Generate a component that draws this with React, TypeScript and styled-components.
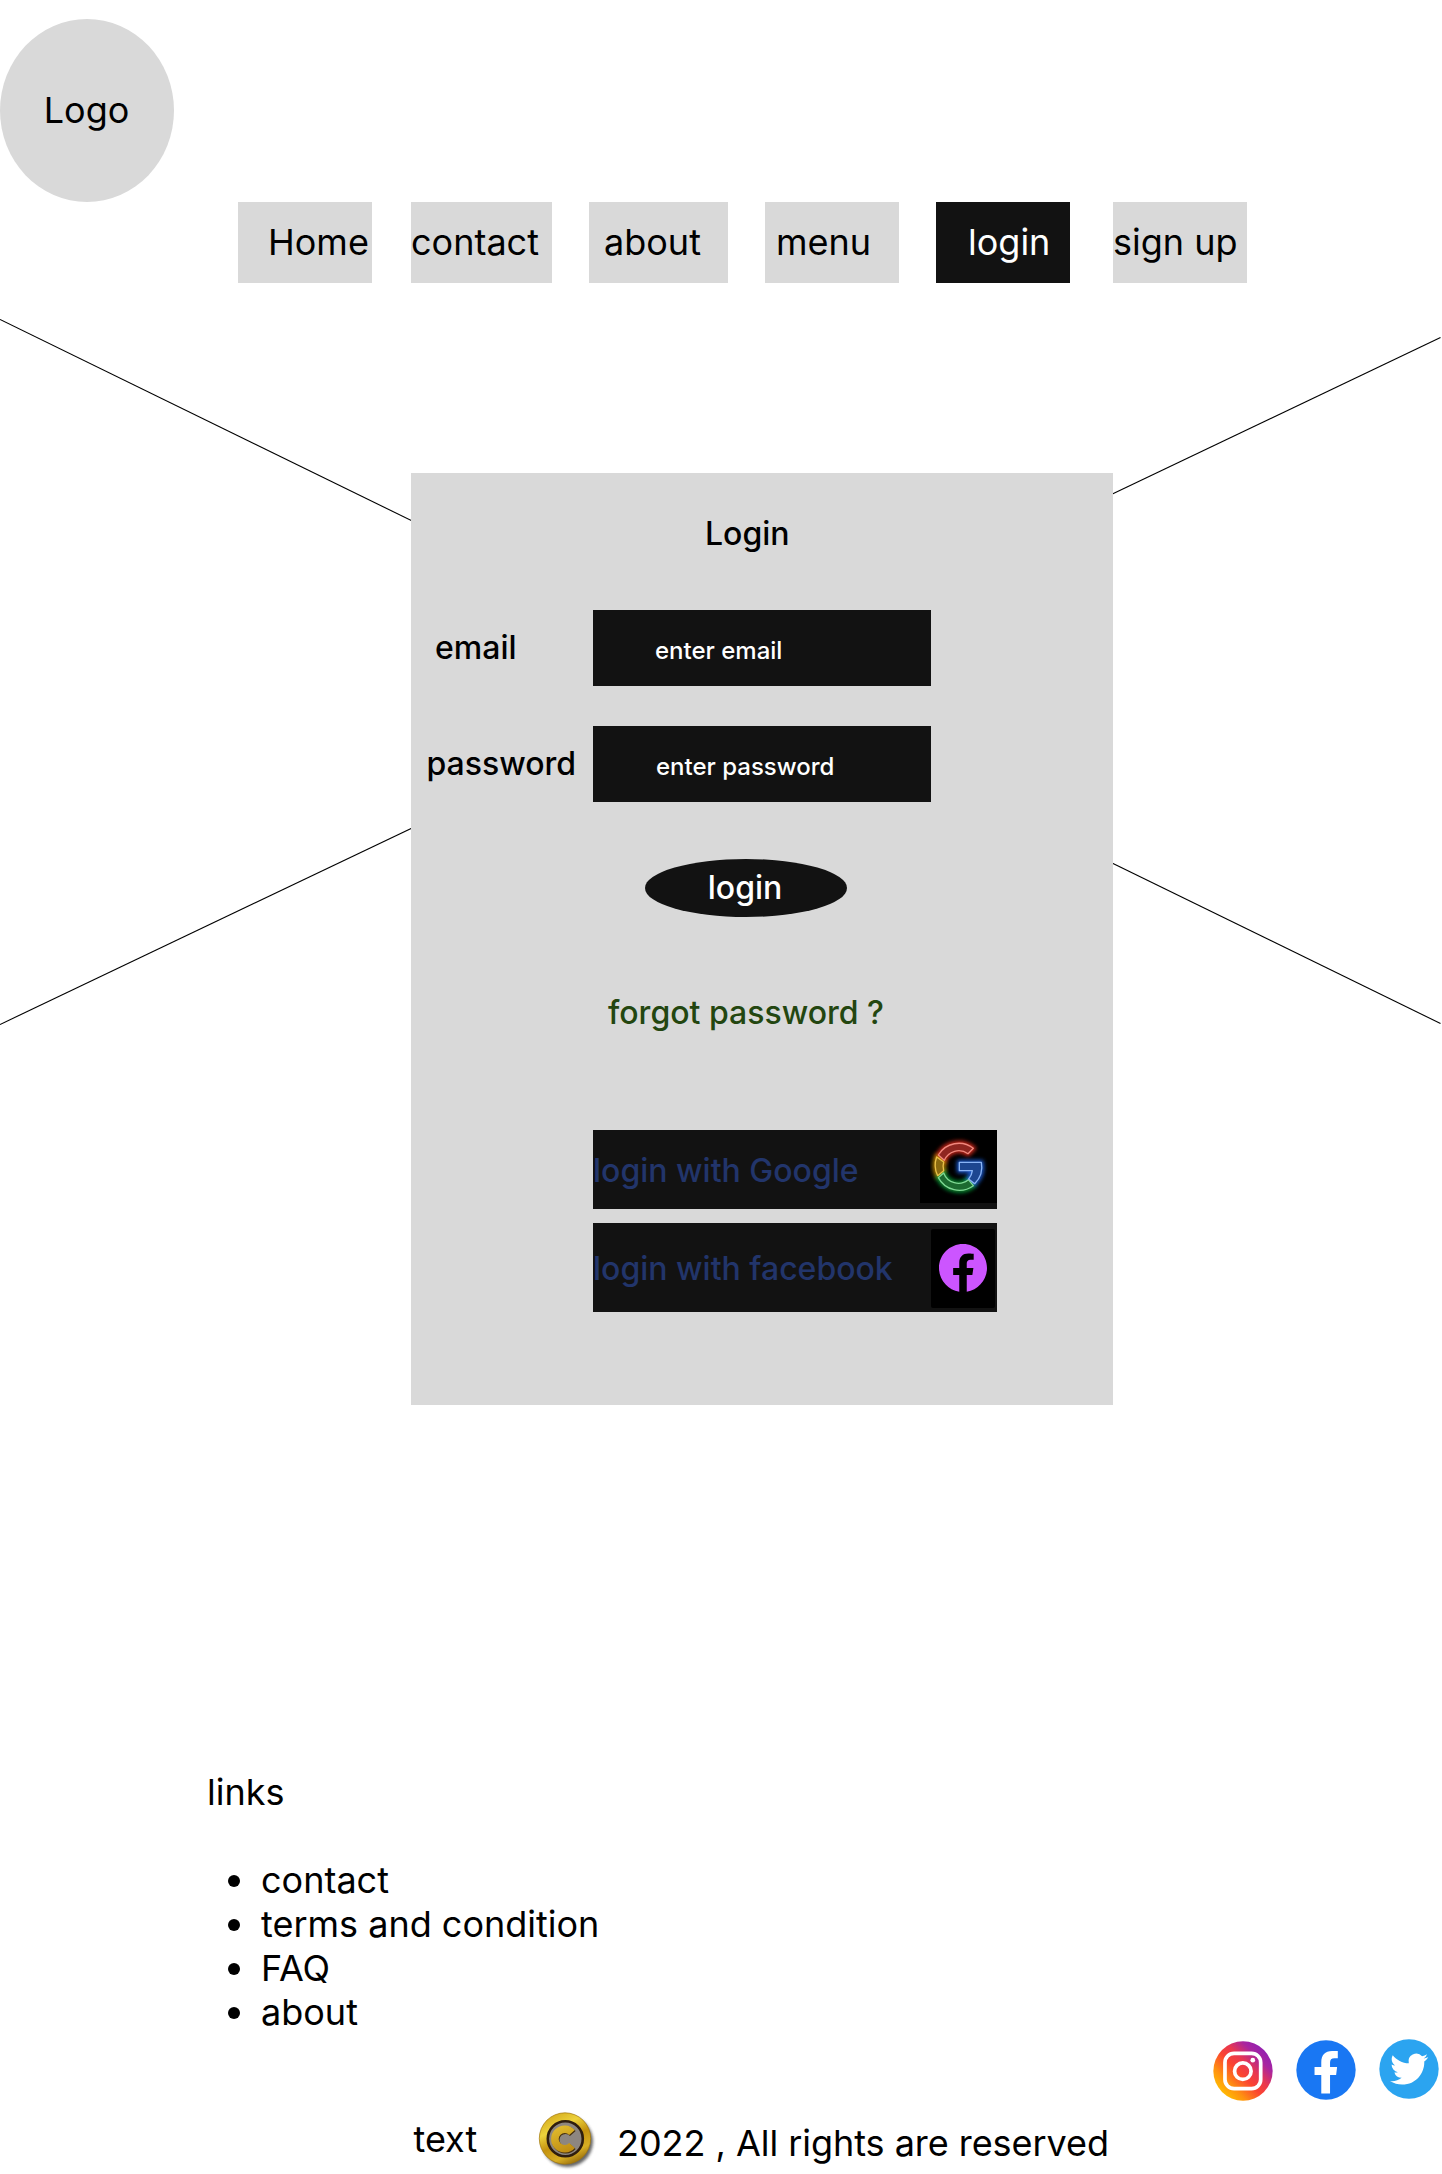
import React from "react";
import styled, { createGlobalStyle, css } from "styled-components";

const GlobalStyle = createGlobalStyle`
  *, *::before { box-sizing: border-box; }
  body {
    margin: 0;
    background: #fff;
    color: #000;
    font-family: Inter, "Liberation Sans", sans-serif;
  }
`;

const Page = styled.div`
  width: 1442px;
  height: 2174px;
  overflow: hidden;
  display: flex;
  flex-direction: column;
  font-size: 36px;
  line-height: 44px;
`;

const Header = styled.header`
  height: 283px;
  padding-top: 19px;
`;

const Logo = styled.div`
  width: 174px;
  height: 183px;
  padding: 0 1px 2px 0;
  border-radius: 50%;
  background: #d9d9d9;
  display: flex;
  align-items: center;
  justify-content: center;
`;

const Nav = styled.nav`
  display: flex;
  padding-left: 238px;
`;

const NavItem = styled.a<{ $width: number; $gap: number; $indent: number; $active?: boolean }>`
  flex: none;
  width: ${(p) => p.$width}px;
  height: 81px;
  margin-right: ${(p) => p.$gap}px;
  padding: 0 0 2px ${(p) => p.$indent}px;
  display: flex;
  align-items: center;
  white-space: nowrap;
  background: ${(p) => (p.$active ? "#121212" : "#d9d9d9")};
  color: ${(p) => (p.$active ? "#fff" : "#000")};
`;

const Stage = styled.main`
  position: relative;
  height: 1122px;
  padding: 190px 0 0 411px;
`;

const Backdrop = styled.svg`
  position: absolute;
  inset: 0;
  z-index: -1;
`;

const Card = styled.section`
  width: 702px;
  height: 932px;
  background: #d9d9d9;
  display: flex;
  flex-direction: column;
  align-items: flex-start;
  font-size: 32px;
  line-height: 39px;
  font-weight: 500;
`;

const Title = styled.h1`
  margin: 41px 0 57px 294px;
  font: inherit;
`;

const Field = styled.label<{ $indent: number }>`
  display: grid;
  grid-template-columns: 182px 338px;
  align-items: center;
  height: 76px;
  margin-bottom: 40px;
  & > :first-child {
    padding: 0 0 2px ${(p) => p.$indent}px;
  }
`;

const Entry = styled.span<{ $indent: number }>`
  height: 76px;
  padding: 4px 0 0 ${(p) => p.$indent}px;
  display: flex;
  align-items: center;
  background: #121212;
  color: #fff;
  font-size: 24px;
`;

const Submit = styled.button`
  width: 202px;
  height: 58px;
  margin: 17px 0 0 234px;
  padding: 0 2px 2px 0;
  border: 0;
  border-radius: 50%;
  background: #121212;
  color: #fff;
  font: inherit;
`;

const Forgot = styled.a`
  margin: 76px 0 98px 197px;
  color: #234610;
`;

const Provider = styled.a<{ $height: number }>`
  width: 404px;
  height: ${(p) => p.$height}px;
  margin: 0 0 14px 182px;
  display: flex;
  justify-content: space-between;
  background: #121212;
  color: #22356b;
`;

const ProviderName = styled.span`
  align-self: center;
  padding-top: 2px;
  white-space: nowrap;
`;

const Tile = styled.span<{ $kind: "google" | "facebook" }>`
  display: flex;
  align-items: center;
  justify-content: center;
  background: #000;
  ${(p) =>
    p.$kind === "google"
      ? css`
          width: 77px;
          height: 73px;
        `
      : css`
          width: 64px;
          height: 79px;
          margin: 6px 2px 0 0;
          padding-bottom: 1px;
          border-radius: 2px;
        `}
`;

const Footer = styled.footer`
  flex: 1;
  padding-top: 365px;
`;

const LinksTitle = styled.h2`
  margin: 0 0 44px 207px;
  font: inherit;
`;

const LinkList = styled.ul`
  margin: 0;
  padding: 0 0 0 228px;
  list-style: none;
`;

const LinkItem = styled.li`
  display: flex;
  align-items: center;
  gap: 21px;
  &::before {
    content: "";
    width: 12px;
    height: 12px;
    margin-top: 2px;
    border-radius: 50%;
    background: #000;
  }
`;

const Socials = styled.div`
  display: flex;
  justify-content: flex-end;
  align-items: flex-start;
  gap: 23px;
  height: 61px;
  margin-top: 5px;
  padding-right: 3px;
`;

const SocialIcon = styled.svg<{ $drop: number }>`
  width: 60px;
  height: 60px;
  margin-top: ${(p) => p.$drop}px;
`;

const Legal = styled.div`
  display: flex;
  align-items: flex-start;
  padding-left: 413.5px;
  margin-top: 8px;
`;

const LegalLabel = styled.span`
  width: 121.5px;
  margin-top: 9px;
`;

const Coin = styled.svg`
  width: 64px;
  height: 64px;
`;

const LegalText = styled.span`
  margin: 13px 0 0 18px;
  letter-spacing: -0.04px;
  white-space: nowrap;
`;

const navItems = [
  { label: "Home", width: 134, gap: 39, indent: 30 },
  { label: "contact", width: 141, gap: 37, indent: 0 },
  { label: "about", width: 139, gap: 37, indent: 15 },
  { label: "menu", width: 134, gap: 37, indent: 11 },
  { label: "login", width: 134, gap: 43, indent: 32, active: true },
  { label: "sign up", width: 134, gap: 0, indent: 0 },
];

const links = ["contact", "terms and condition", "FAQ", "about"];

const neonParts = [
  { fill: "#8f2620", line: "#f0877c", glow: "#ff3020", d: "M55 75A71 71 0 0 1 160 55L144 71A47 47 0 0 0 73 91Z" },
  { fill: "#8a6a10", line: "#e8c04a", glow: "#e0a000", d: "M50 81L71 96A47 47 0 0 0 71 122L53 137A71 71 0 0 1 50 81Z" },
  { fill: "#1c6b30", line: "#7fd893", glow: "#10b040", d: "M55 143L71 129A47 47 0 0 0 145 149L160 167A71 71 0 0 1 55 143Z" },
  { fill: "#1d4690", line: "#8ab4f5", glow: "#2070ff", d: "M118 97H184A71 71 0 0 1 164 161L146 147A47 47 0 0 0 157 122H118Z" },
];

const NeonG = () => (
  <svg width="77" height="73" viewBox="0 0 231 219">
    <defs>
      <filter id="glow" x="-60%" y="-60%" width="220%" height="220%">
        <feGaussianBlur stdDeviation="7" />
      </filter>
    </defs>
    {neonParts.map((p) => (
      <path key={p.glow} d={p.d} fill="none" stroke={p.glow} strokeWidth="13" opacity="0.9" filter="url(#glow)" />
    ))}
    {neonParts.map((p) => (
      <path key={p.line} d={p.d} fill={p.fill} stroke={p.line} strokeWidth="4" strokeLinejoin="round" />
    ))}
  </svg>
);

const PurpleFacebook = () => (
  <svg width="48" height="48" viewBox="8 8 496 496">
    <path
      fill="#cc55ff"
      d="M504 256C504 119 393 8 256 8S8 119 8 256c0 123.78 90.69 226.38 209.25 245V327.69h-63V256h63v-54.64c0-62.15 37-96.48 93.67-96.48 27.14 0 55.52 4.84 55.52 4.84v61h-31.28c-30.8 0-40.41 19.12-40.41 38.73V256h68.78l-11 71.69h-57.78V501C413.31 482.38 504 379.78 504 256z"
    />
  </svg>
);

const Instagram = () => (
  <SocialIcon $drop={2} viewBox="0 0 178 178">
    <defs>
      <linearGradient id="insta" x1="0.1" y1="0.88" x2="0.88" y2="0.12">
        <stop offset="0" stopColor="#ffc400" />
        <stop offset="0.22" stopColor="#ff9210" />
        <stop offset="0.45" stopColor="#fb4430" />
        <stop offset="0.62" stopColor="#e9384f" />
        <stop offset="0.82" stopColor="#a9259f" />
        <stop offset="1" stopColor="#8f20b4" />
      </linearGradient>
    </defs>
    <circle cx="89" cy="89" r="88" fill="url(#insta)" />
    <g fill="none" stroke="#fff" strokeWidth="11">
      <rect x="35.500" y="36.500" width="106" height="105" rx="27" />
      <circle cx="88.500" cy="89.500" r="24.500" />
    </g>
    <circle cx="118" cy="57" r="7" fill="#fff" />
  </SocialIcon>
);

const Facebook = () => (
  <SocialIcon $drop={1} viewBox="0 0 178 178">
    <circle cx="89" cy="89" r="88" fill="#1977f3" />
    <path fill="#fff" d="M75 159V104H55V80H75V67C75 45 86 33 107 33H124V54H114C105 54 101 58 101 67V80H122L119 104H101V159Z" />
  </SocialIcon>
);

const Twitter = () => (
  <SocialIcon $drop={0} viewBox="0 0 178 178">
    <circle cx="89" cy="89" r="88" fill="#2ba4f0" />
    <path
      transform="translate(33 33) scale(4.700)"
      fill="#fff"
      d="M23.953 4.570a10 10 0 01-2.825.775 4.958 4.958 0 002.163-2.723c-.951.555-2.005.959-3.127 1.184a4.920 4.920 0 00-8.384 4.482C7.690 8.095 4.067 6.130 1.640 3.162a4.822 4.822 0 00-.666 2.475c0 1.710.870 3.213 2.188 4.096a4.904 4.904 0 01-2.228-.616v.060a4.923 4.923 0 003.946 4.827 4.996 4.996 0 01-2.212.085 4.936 4.936 0 004.604 3.417 9.867 9.867 0 01-6.102 2.105c-.390 0-.779-.023-1.170-.067a13.995 13.995 0 007.557 2.209c9.053 0 13.998-7.496 13.998-13.985 0-.210 0-.420-.015-.630A9.935 9.935 0 0024 4.590z"
    />
  </SocialIcon>
);

const GoldCoin = () => (
  <Coin viewBox="0 0 64 64" role="img" aria-label="copyright">
    <defs>
      <linearGradient id="gold" x1="0.2" y1="0" x2="0.7" y2="1">
        <stop offset="0" stopColor="#d3a81a" />
        <stop offset="0.3" stopColor="#edd23c" />
        <stop offset="0.55" stopColor="#c4920f" />
        <stop offset="0.8" stopColor="#d8ae24" />
        <stop offset="1" stopColor="#94690a" />
      </linearGradient>
      <linearGradient id="goldLetter" gradientUnits="userSpaceOnUse" x1="22" y1="17" x2="34" y2="45">
        <stop offset="0" stopColor="#e2bd2e" />
        <stop offset="1" stopColor="#bd8a12" />
      </linearGradient>
      <filter id="shade" x="-20%" y="-20%" width="150%" height="150%">
        <feGaussianBlur stdDeviation="1.500" />
      </filter>
    </defs>
    <circle cx="32.500" cy="33.500" r="25.500" fill="#333" opacity="0.75" filter="url(#shade)" />
    <circle cx="30" cy="30.500" r="25.700" fill="url(#gold)" stroke="#a0750c" strokeWidth="0.700" />
    <circle cx="30.300" cy="30.800" r="17.500" fill="#8d8680" stroke="#2e1d0e" strokeWidth="2.600" />
    <path d="M37 24.500A9.800 9.800 0 1 0 37 37.500" fill="none" stroke="#453010" strokeWidth="7.600" transform="translate(0.800 0.900)" />
    <path d="M37 24.500A9.800 9.800 0 1 0 37 37.500" fill="none" stroke="url(#goldLetter)" strokeWidth="7.600" />
  </Coin>
);

export default function App() {
  return (
    <Page>
      <GlobalStyle />
      <Header>
        <Logo>Logo</Logo>
        <Nav>
          {navItems.map((n) => (
            <NavItem key={n.label} $width={n.width} $gap={n.gap} $indent={n.indent} $active={n.active}>
              {n.label}
            </NavItem>
          ))}
        </Nav>
      </Header>

      <Stage>
        <Backdrop width="1442" height="760" viewBox="0 283 1442 760" stroke="#000" strokeWidth="1.100">
          <line x1="0" y1="319.500" x2="1440.500" y2="1023.500" />
          <line x1="0" y1="1024.500" x2="1440.500" y2="337.500" />
        </Backdrop>
        <Card>
          <Title>Login</Title>
          <Field $indent={24}>
            <span>email</span>
            <Entry $indent={62}>enter email</Entry>
          </Field>
          <Field $indent={15.5}>
            <span>password</span>
            <Entry $indent={63}>enter password</Entry>
          </Field>
          <Submit>login</Submit>
          <Forgot>forgot password ?</Forgot>
          <Provider $height={79}>
            <ProviderName>login with Google</ProviderName>
            <Tile $kind="google">
              <NeonG />
            </Tile>
          </Provider>
          <Provider $height={89}>
            <ProviderName>login with facebook</ProviderName>
            <Tile $kind="facebook">
              <PurpleFacebook />
            </Tile>
          </Provider>
        </Card>
      </Stage>

      <Footer>
        <LinksTitle>links</LinksTitle>
        <LinkList>
          {links.map((l) => (
            <LinkItem key={l}>{l}</LinkItem>
          ))}
        </LinkList>
        <Socials>
          <Instagram />
          <Facebook />
          <Twitter />
        </Socials>
        <Legal>
          <LegalLabel>text</LegalLabel>
          <GoldCoin />
          <LegalText>2022 , All rights are reserved</LegalText>
        </Legal>
      </Footer>
    </Page>
  );
}
